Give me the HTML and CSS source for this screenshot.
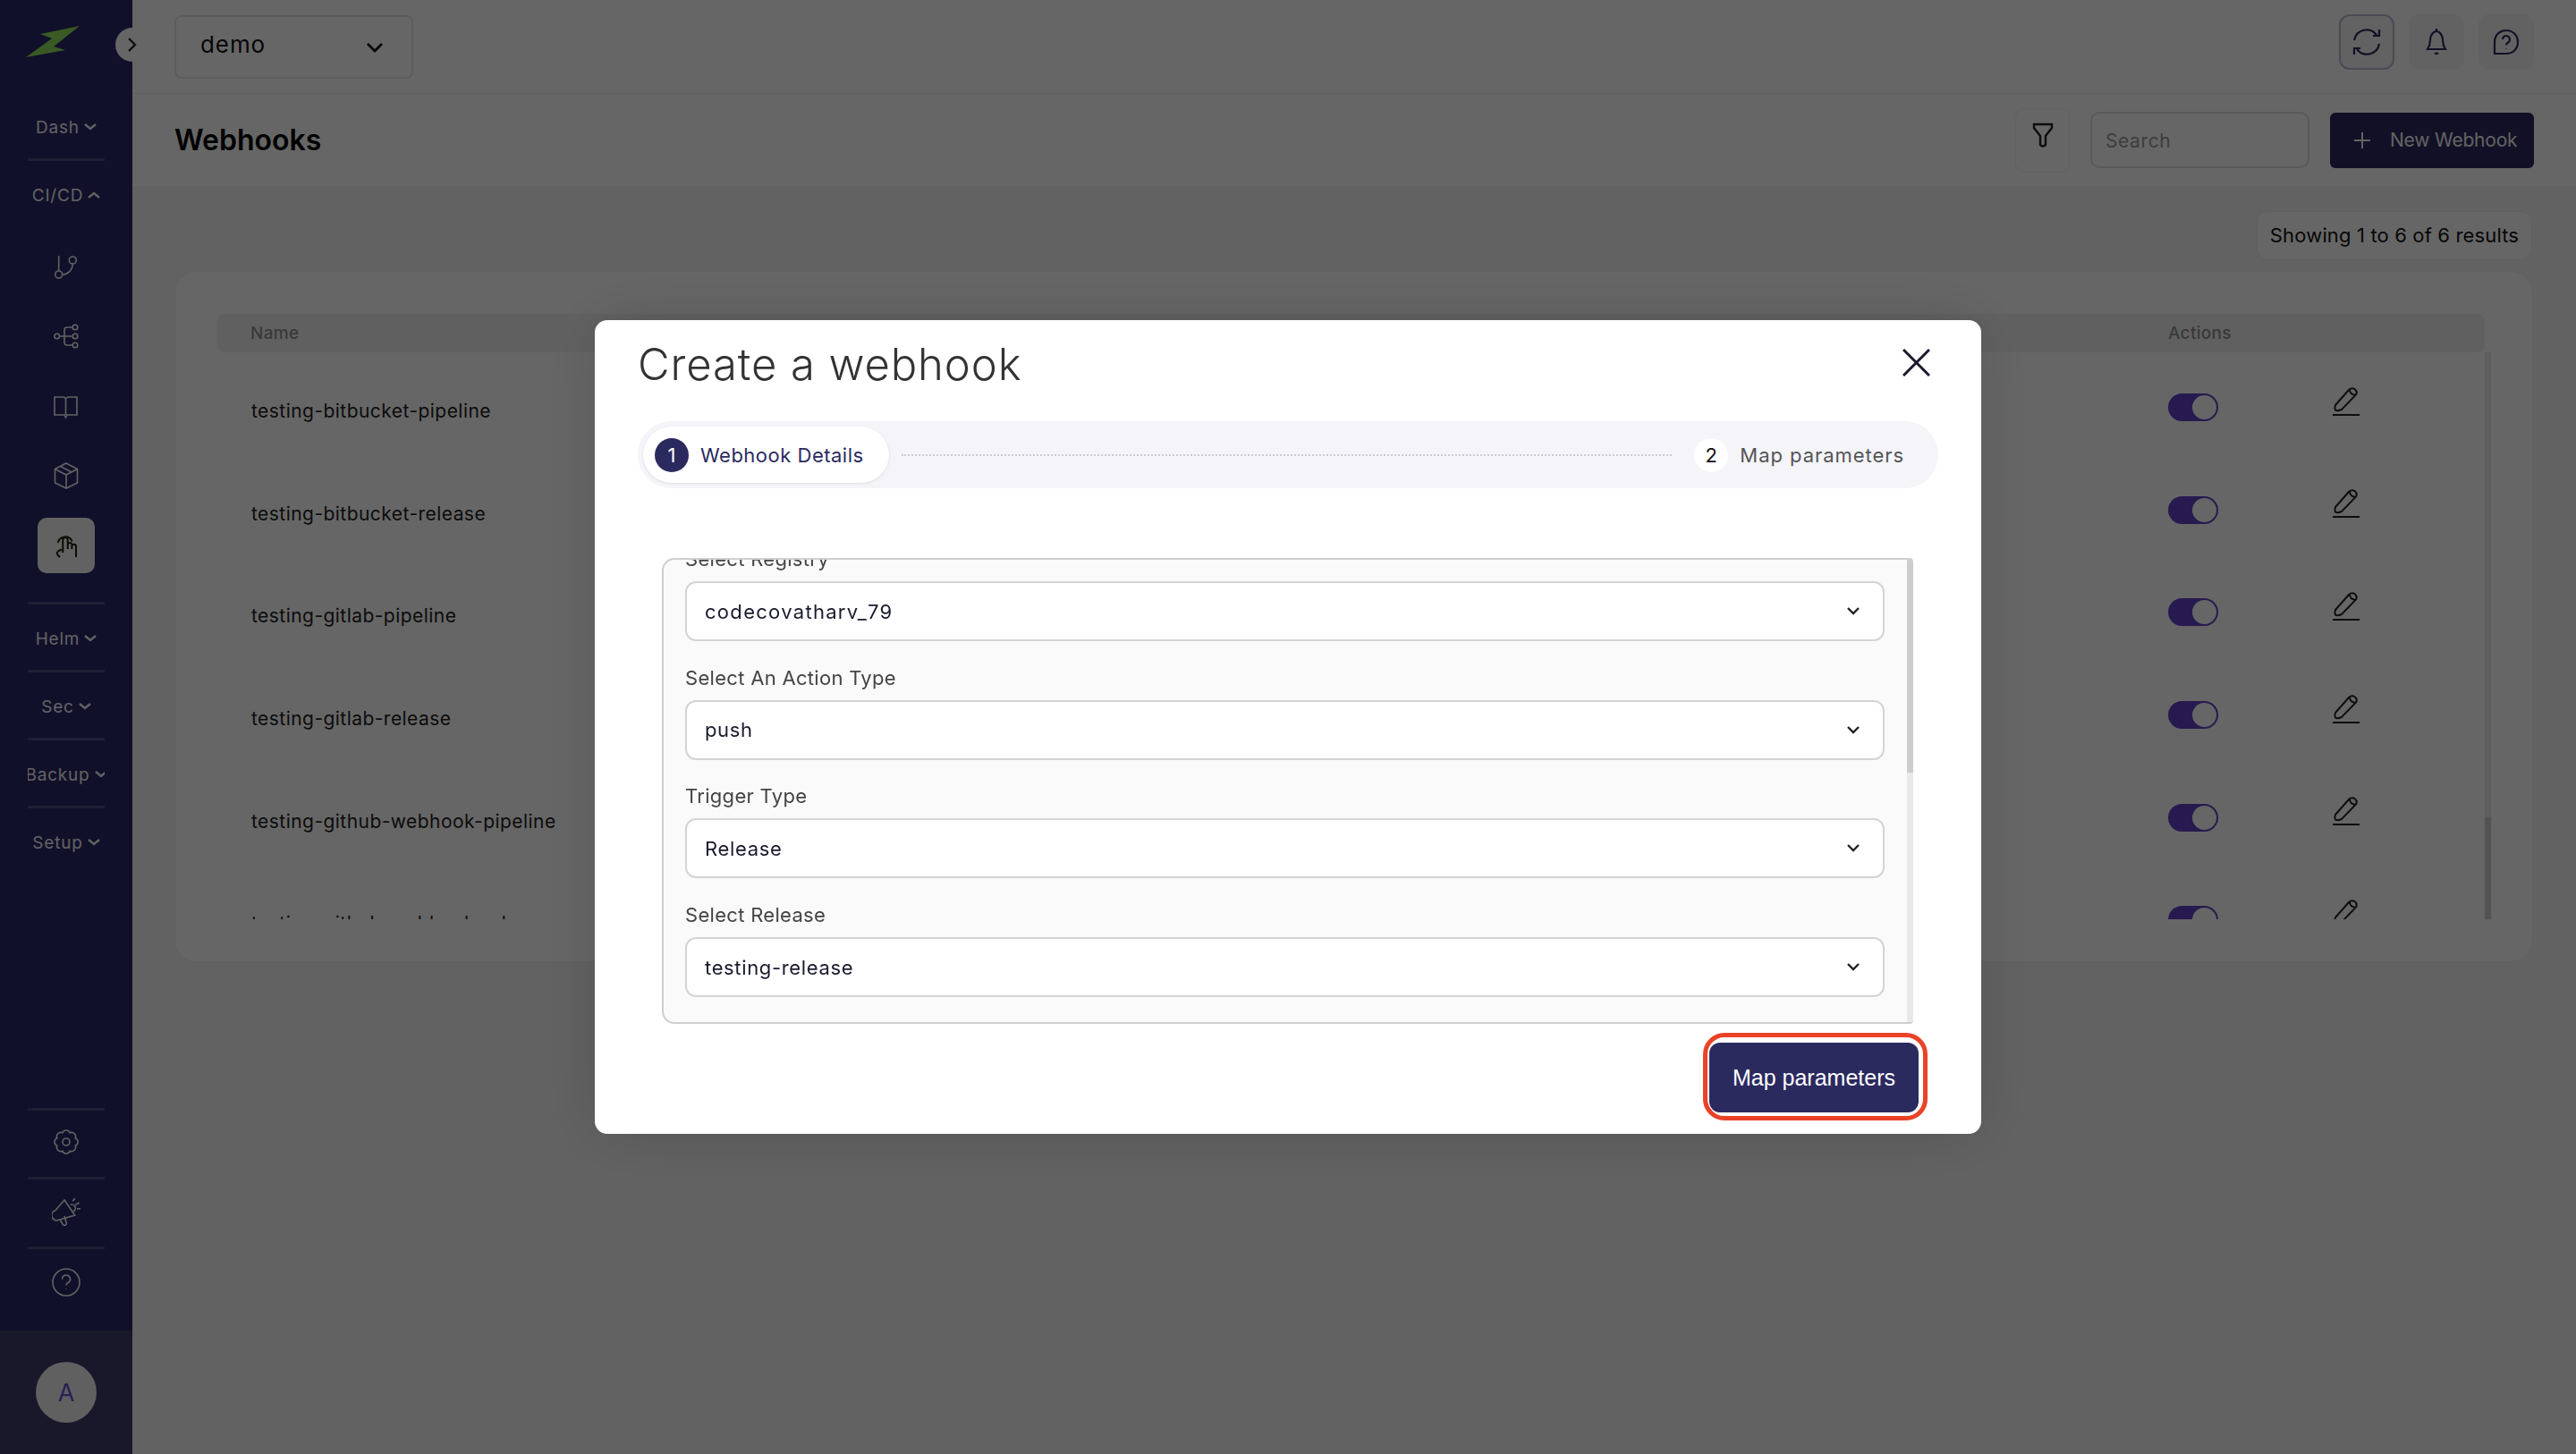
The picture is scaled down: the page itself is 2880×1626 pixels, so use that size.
FILE: index.html
```html
<!DOCTYPE html>
<html lang="en">
<head>
<meta charset="utf-8">
<title>Webhooks</title>
<link rel="stylesheet" href="styles.css">
</head>
<body>
<div class="app">
  <aside class="sidebar">
    <div class="brand">
      <svg class="logo" viewBox="0 0 64 38"><polygon points="60,2 16,11 29,16 0,37 44,29 31,25"/></svg>
    </div>
    <div class="sec"><div class="sec-label"><span>Dash</span><svg class="chev" viewBox="0 0 14 8"><path d="M1 1l6 5 6-5"/></svg></div></div>
    <div class="sec sec-open">
      <div class="sec-label"><span>CI/CD</span><svg class="chev" viewBox="0 0 14 8"><path d="M1 7l6-5 6 5"/></svg></div>
      <div class="nav-list">
        <div class="nav-item"><svg class="ico" viewBox="0 0 32 32"><path d="M7.7 4v17"/><circle cx="7.7" cy="25" r="4"/><circle cx="23.3" cy="9" r="4"/><path d="M11.7 25c6.300 0 11.300-5 11.600-12"/></svg></div>
        <div class="nav-item"><svg class="ico" viewBox="0 0 32 32"><circle cx="5.700" cy="16" r="2.800"/><path d="M8.500 16h14M23 6h-6q-3 0-3 3v14q0 3 3 3h6"/><circle cx="26" cy="6" r="2.800"/><circle cx="26" cy="16" r="2.800"/><circle cx="26" cy="26" r="2.800"/></svg></div>
        <div class="nav-item"><svg class="ico" viewBox="0 0 32 32"><path d="M3 6h9c2 0 3.500 1 3.500 3 0-2 1.500-3 3.500-3h9v20H17l-1.500 3-1.500-3H3zM15.500 9v17"/></svg></div>
        <div class="nav-item"><svg class="ico" viewBox="0 0 32 32"><path d="M16 2l12.500 6.500V24L16 30 3.500 24V8.500zM3.500 8.500L16 15l12.500-6.500M16 15v15M9.500 5.500L22 12"/></svg></div>
        <div class="nav-item nav-active"><svg class="ico ico-dark" viewBox="0 0 32 32"><path d="M12.300 24V9.700a2.700 2.700 0 0 1 5.400 0V20M17.700 15a2.400 2.400 0 0 1 4.700 0V20M22.400 17a2.300 2.300 0 0 1 4.600 0V29M12.300 19.700L7 22.500Q3.500 24.500 9 29M6.700 13A8.500 8.500 0 0 1 22.700 11.300"/></svg></div>
      </div>
    </div>
    <div class="sec"><div class="sec-label"><span>Helm</span><svg class="chev" viewBox="0 0 14 8"><path d="M1 1l6 5 6-5"/></svg></div></div>
    <div class="sec"><div class="sec-label"><span>Sec</span><svg class="chev" viewBox="0 0 14 8"><path d="M1 1l6 5 6-5"/></svg></div></div>
    <div class="sec"><div class="sec-label"><span>Backup</span><svg class="chev" viewBox="0 0 14 8"><path d="M1 1l6 5 6-5"/></svg></div></div>
    <div class="sec sec-last"><div class="sec-label"><span>Setup</span><svg class="chev" viewBox="0 0 14 8"><path d="M1 1l6 5 6-5"/></svg></div></div>
    <div class="side-bottom">
      <div class="bottom-item"><svg class="ico" viewBox="-16 -16 32 32"><path d="M10.160-4.200A4.500 4.500 0 0 1 10.160 4.200 4.500 4.500 0 0 1 4.200 10.160 4.500 4.500 0 0 1-4.200 10.160 4.500 4.500 0 0 1-10.160 4.200 4.500 4.500 0 0 1-10.160-4.200 4.500 4.500 0 0 1-4.200-10.160 4.500 4.500 0 0 1 4.200-10.160 4.500 4.500 0 0 1 10.160-4.200z"/><circle r="4"/></svg></div>
      <div class="bottom-item"><svg class="ico" viewBox="0 0 32 32"><path d="M14 3L25.700 20 7 25.500A5.500 5.500 0 0 1 4 14.500zM9 24.500l3 5.500a2.200 2.200 0 0 0 4-2l-2-7M20.700 8.300a4 4 0 0 1 3.300 7.400M23.300 4.300L25.700 1M26.300 8.300l4.400-2.300M28 12.700h4"/></svg></div>
      <div class="bottom-item"><svg class="ico" viewBox="0 0 32 32"><circle cx="16" cy="16" r="15"/><path d="M11.500 12.500a4.500 4.500 0 1 1 6.500 4c-1.300.8-2 1.500-2 3M16 23.500v.6"/></svg></div>
    </div>
    <div class="user"><div class="avatar">A</div></div>
    <button class="collapse" type="button"><svg viewBox="0 0 12 18"><path d="M2 2l7 7-7 7"/></svg></button>
  </aside>

  <main class="main">
    <header class="topbar">
      <div class="org"><span>demo</span><svg class="org-chev" viewBox="0 0 20 12"><path d="M2 2l8 8 8-8"/></svg></div>
      <div class="top-actions">
        <div class="top-btn top-btn-on"><svg class="ico-top" viewBox="0 0 32 32"><path d="M2 14A14 14 0 0 1 27 8M30 2v7h-7M30 18A14 14 0 0 1 5 24M2 30v-7h7"/></svg></div>
        <div class="top-btn"><svg class="ico-top" viewBox="0 0 32 32"><path d="M6 24c2-3 3-5 3-10 0-5 3-10 7-10s7 5 7 10c0 5 1 7 3 10zM14 28q2 2 4 0M16 1v3" /></svg></div>
        <div class="top-btn"><svg class="ico-top" viewBox="0 0 32 32"><path d="M3 29V16C3 8 9 3 16 3s13 5 13 13-6 13-13 13zM12 13a4 4 0 1 1 6 3.500c-1.300.7-2 1.300-2 3M16 23v.6"/></svg></div>
      </div>
    </header>
    <section class="pagehead">
      <h1 class="page-title">Webhooks</h1>
      <div class="filter"><svg viewBox="0 0 24 28"><path d="M2 2h20v4l-7 9v10q-3 3-6 0V15L2 6z"/></svg></div>
      <div class="search">Search</div>
      <div class="new-btn"><svg viewBox="0 0 18 18"><path d="M9 0v18M0 9h18"/></svg><span>New Webhook</span></div>
    </section>
    <div class="results-row"><div class="results">Showing 1 to 6 of 6 results</div></div>
    <section class="card">
      <div class="thead"><span>Name</span><span>Actions</span><span></span></div>
      <div class="tbody">
        <div class="rows">
          <div class="row"><div class="cell-name">testing-bitbucket-pipeline</div><div class="cell-toggle"><span class="toggle"><i></i></span></div><div class="cell-edit"><svg viewBox="0 0 30 33"><path d="M3 21L18 4q3-3 6.500-1 3.500 3 1.500 6.500L10 26q-5 2-7 .5-1-2.500 0-5.500zM19 3.500q0 5.500 6.500 6.500M0 32h30"/></svg></div></div>
          <div class="row"><div class="cell-name">testing-bitbucket-release</div><div class="cell-toggle"><span class="toggle"><i></i></span></div><div class="cell-edit"><svg viewBox="0 0 30 33"><path d="M3 21L18 4q3-3 6.500-1 3.500 3 1.500 6.500L10 26q-5 2-7 .5-1-2.500 0-5.500zM19 3.500q0 5.500 6.500 6.500M0 32h30"/></svg></div></div>
          <div class="row"><div class="cell-name">testing-gitlab-pipeline</div><div class="cell-toggle"><span class="toggle"><i></i></span></div><div class="cell-edit"><svg viewBox="0 0 30 33"><path d="M3 21L18 4q3-3 6.500-1 3.500 3 1.500 6.500L10 26q-5 2-7 .5-1-2.500 0-5.500zM19 3.500q0 5.500 6.500 6.500M0 32h30"/></svg></div></div>
          <div class="row"><div class="cell-name">testing-gitlab-release</div><div class="cell-toggle"><span class="toggle"><i></i></span></div><div class="cell-edit"><svg viewBox="0 0 30 33"><path d="M3 21L18 4q3-3 6.500-1 3.500 3 1.500 6.500L10 26q-5 2-7 .5-1-2.500 0-5.500zM19 3.500q0 5.500 6.500 6.500M0 32h30"/></svg></div></div>
          <div class="row"><div class="cell-name">testing-github-webhook-pipeline</div><div class="cell-toggle"><span class="toggle"><i></i></span></div><div class="cell-edit"><svg viewBox="0 0 30 33"><path d="M3 21L18 4q3-3 6.500-1 3.500 3 1.500 6.500L10 26q-5 2-7 .5-1-2.500 0-5.500zM19 3.500q0 5.500 6.500 6.500M0 32h30"/></svg></div></div>
          <div class="row"><div class="cell-name">testing-github-webhook-release</div><div class="cell-toggle"><span class="toggle"><i></i></span></div><div class="cell-edit"><svg viewBox="0 0 30 33"><path d="M3 21L18 4q3-3 6.500-1 3.500 3 1.500 6.500L10 26q-5 2-7 .5-1-2.500 0-5.500zM19 3.500q0 5.500 6.500 6.500M0 32h30"/></svg></div></div>
        </div>
        <div class="tscroll"><div class="tthumb"></div></div>
      </div>
    </section>
  </main>
</div>

<div class="overlay">
  <div class="modal">
    <div class="modal-head">
      <h2 class="modal-title">Create a webhook</h2>
      <button class="close" type="button"><svg viewBox="0 0 31 31"><path d="M1 1l29 29M30 1L1 30"/></svg></button>
    </div>
    <div class="stepper">
      <div class="step-on"><span class="num num-on">1</span><span class="step-text">Webhook Details</span></div>
      <div class="step-line"></div>
      <span class="num">2</span><span class="step-text step-off">Map parameters</span>
    </div>
    <div class="panel">
      <div class="form">
        <div class="field"><div class="label">Select Registry</div><div class="select"><span class="val-wide">codecovatharv_79</span><svg class="sel-chev" viewBox="0 0 14 9"><path d="M1 1l6 6 6-6"/></svg></div></div>
        <div class="field"><div class="label">Select An Action Type</div><div class="select"><span>push</span><svg class="sel-chev" viewBox="0 0 14 9"><path d="M1 1l6 6 6-6"/></svg></div></div>
        <div class="field"><div class="label">Trigger Type</div><div class="select"><span>Release</span><svg class="sel-chev" viewBox="0 0 14 9"><path d="M1 1l6 6 6-6"/></svg></div></div>
        <div class="field"><div class="label">Select Release</div><div class="select"><span>testing-release</span><svg class="sel-chev" viewBox="0 0 14 9"><path d="M1 1l6 6 6-6"/></svg></div></div>
      </div>
      <div class="pscroll"><div class="pthumb"></div></div>
    </div>
    <div class="modal-foot">
      <button class="map-btn" type="button">Map parameters<span class="ring"></span></button>
    </div>
  </div>
</div>
</body>
</html>
```
FILE: styles.css
```css
* { box-sizing: border-box; }
html, body { margin: 0; height: 100%; overflow: hidden; }
body { font-family: Inter, "Liberation Sans", sans-serif; color: #222; background: #f5f5f6; }
svg { display: block; fill: none; }
button { border: 0; padding: 0; background: none; font: inherit; }

.app { display: flex; height: 1626px; }

/* sidebar */
.sidebar { position: relative; width: 148px; flex: none; background: #2b2969; display: flex; flex-direction: column; align-items: center; color: #f4f4f8; }
.brand { height: 104px; width: 100%; padding: 27px 0 0 29px; }
.logo { width: 64px; height: 38px; }
.logo polygon { fill: #8fe05a; }
.sec { width: 86px; height: 76px; flex: none; border-bottom: 3px solid rgba(255,255,255,.17); overflow: hidden; display: flex; flex-direction: column; align-items: center; }
.sec-open { height: 496px; }
.sec-last { border-bottom: 0; }
.sec-label { height: 76px; flex: none; display: flex; align-items: center; justify-content: center; gap: 5px; width: 86px; font-size: 19px; letter-spacing: .8px; }
.sec-label span { flex: none; }
.chev { width: 14px; height: 8px; flex: none; }
.chev path { stroke: currentColor; stroke-width: 2.4; }
.nav-list { display: flex; flex-direction: column; align-items: center; padding-top: 3px; }
.nav-item { width: 64px; height: 78px; display: flex; align-items: center; justify-content: center; }
.nav-active { height: 62px; margin-top: 8px; background: #f5f5f6; border-radius: 10px; }
.ico { width: 32px; height: 32px; stroke: currentColor; stroke-width: 1.6; }
.ico-dark { stroke-width: 2; stroke: #222210; }
.side-bottom { margin-top: auto; margin-bottom: 17px; width: 86px; }
.bottom-item { height: 77.500px; border-top: 3px solid rgba(255,255,255,.17); display: flex; align-items: center; justify-content: center; }
.bottom-item:not(:last-child) { padding-bottom: 3px; }
.user { width: 100%; height: 138px; flex: none; background: #3c3c69; display: flex; justify-content: center; padding-top: 35px; }
.avatar { width: 68px; height: 68px; border-radius: 50%; background: #f0f0f3; color: #6b4bd0; font-size: 27px; display: flex; align-items: center; justify-content: center; }
.collapse { position: absolute; left: 129px; top: 31px; width: 38px; height: 38px; border-radius: 50%; background: #fff; display: flex; align-items: center; justify-content: center; }
.collapse svg { width: 12px; height: 18px; }
.collapse path { stroke: #222; stroke-width: 2.4; }

/* main */
.main { flex: 1; min-width: 0; display: flex; flex-direction: column; }
.topbar { height: 105px; flex: none; background: #fff; border-bottom: 1px solid #eee; display: flex; justify-content: space-between; align-items: flex-start; padding: 0 47px; }
.org { width: 267px; height: 71px; margin-top: 17px; border: 2px solid #e6e6e6; border-radius: 8px; display: flex; align-items: center; justify-content: space-between; padding: 0 31px 6px 27px; font-size: 26px; letter-spacing: .9px; color: #111; }
.org-chev { width: 20px; height: 12px; margin-top: 6px; }
.org-chev path { stroke: #111; stroke-width: 2.8; }
.top-actions { display: flex; gap: 16px; margin-top: 16px; }
.top-btn { width: 62px; height: 62px; border-radius: 12px; background: #f4f4f5; display: flex; align-items: center; justify-content: center; }
.top-btn-on { border: 2px solid #b9b8d6; }
.ico-top { width: 32px; height: 32px; stroke: #2b2a5f; stroke-width: 2.2; }
.pagehead { height: 103px; flex: none; background: #fff; display: flex; align-items: center; padding: 0 47px; gap: 23px; }
.page-title { margin: 0 auto 0 0; font-size: 32px; font-weight: 600; color: #000; }
.filter { width: 61px; height: 72px; border: 1px solid #f2f2f2; border-radius: 10px; display: flex; align-items: flex-start; justify-content: center; padding-top: 15px; }
.filter svg { width: 24px; height: 28px; stroke: #222; stroke-width: 2.4; }
.search { width: 245px; height: 63px; border: 2px solid #dedede; border-radius: 10px; display: flex; align-items: center; padding: 2px 15px 0; font-size: 21px; letter-spacing: .6px; color: #9a9a9a; }
.new-btn { width: 228px; height: 62px; border-radius: 6px; background: #2b2a5f; color: #f4f4f4; display: flex; align-items: center; gap: 22px; padding-left: 27px; font-size: 21px; letter-spacing: -.2px; white-space: nowrap; }
.new-btn svg { width: 18px; height: 18px; flex: none; }
.new-btn path { stroke: #f4f4f4; stroke-width: 2; }
.results-row { display: flex; justify-content: flex-end; padding: 28px 49px 0 0; }
.results { height: 55px; width: 308px; background: #fff; border: 1px solid #ececec; border-radius: 12px; display: flex; align-items: center; justify-content: center; padding-bottom: 2px; font-size: 22px; letter-spacing: .15px; color: #111; white-space: nowrap; }
.card { margin: 12px 48px 0 47px; height: 773px; background: #fff; border: 1px solid #efefef; border-radius: 24px; padding: 47px 46px 47px 47px; }
.thead { display: grid; grid-template-columns: 1fr 184px 170px; height: 43px; align-items: center; padding-left: 37px; margin-right: 7px; background: #f1f1f3; border-radius: 8px; font-size: 19px; font-weight: 500; color: #8f8f8f; letter-spacing: .3px; }
.tbody { display: flex; height: 634px; }
.rows { flex: 1; overflow: hidden; }
.row { height: 114.600px; display: grid; grid-template-columns: 1fr 184px 170px; align-items: center; padding-left: 37px; }
.cell-name { padding: 17px 0 0 1px; font-size: 21px; letter-spacing: .45px; color: #222; }
.cell-toggle { padding-top: 9px; }
.toggle { display: block; width: 56px; height: 31px; border-radius: 16px; background: #6241c8; position: relative; }
.toggle i { position: absolute; right: 2px; top: 2px; width: 27px; height: 27px; border-radius: 50%; background: #fff; }
.cell-edit { padding-bottom: 6px; }
.cell-edit svg { width: 30px; height: 33px; stroke: #222; stroke-width: 2; }
.tscroll { width: 7px; flex: none; background: #ececee; display: flex; align-items: flex-end; }
.tthumb { width: 100%; height: 114px; background: #cfcfd2; }

/* modal */
.overlay { position: fixed; inset: 0; background: rgba(0,0,0,.6); display: flex; align-items: center; justify-content: center; }
.modal { width: 1550px; height: 910px; background: #fff; border-radius: 14px; padding: 0 48px; display: flex; flex-direction: column; box-shadow: 0 0 70px rgba(0,0,0,.14); }
.modal-head { height: 113px; flex: none; display: flex; justify-content: space-between; align-items: flex-start; padding-right: 9px; }
.modal-title { margin: 0; font-size: 49px; line-height: 100px; font-weight: 300; color: #333; letter-spacing: .9px; }
.close { margin-top: 32px; width: 31px; height: 31px; }
.close svg { width: 31px; height: 31px; }
.close path { stroke: #1a1a2e; stroke-width: 3; }
.stepper { height: 75px; flex: none; background: #f4f4f9; border-radius: 38px; padding: 0 38px 0 6px; display: flex; align-items: center; }
.step-on { width: 275px; height: 63px; background: #fff; border-radius: 32px; display: flex; align-items: center; gap: 13px; padding-left: 13px; box-shadow: 0 1px 3px rgba(0,0,0,.1); }
.num { width: 38px; height: 38px; flex: none; border-radius: 50%; background: #fff; display: flex; align-items: center; justify-content: center; font-size: 22px; color: #111; }
.num-on { background: #2b2a5f; color: #fff; }
.step-text { font-size: 22px; letter-spacing: .5px; color: #2b2a5f; white-space: nowrap; }
.step-line { flex: 1; margin: 0 25px 0 14px; border-top: 2px dotted #ccc; }
.step-off { margin-left: 13px; color: #555; letter-spacing: .95px; }
.panel { height: 521px; flex: none; margin: 78px 28px 0 27px; background: #fafafa; border: 2px solid #cfcfcf; border-right: 0; border-radius: 14px 4px 4px 14px; overflow: hidden; display: flex; }
.form { flex: 1; margin-top: -42px; padding: 0 25px 0 24px; }
.field { height: 132.700px; }
.label { height: 66px; line-height: 50px; padding-top: 16px; font-size: 22px; letter-spacing: .3px; color: #444; }
.select { height: 67px; background: #fff; border: 2px solid #d4d4d4; border-radius: 12px; display: flex; align-items: center; justify-content: space-between; padding: 0 26px 0 20px; font-size: 22px; letter-spacing: .65px; color: #1a1a2e; }
.val-wide { letter-spacing: 1.3px; }
.sel-chev { width: 14px; height: 9px; }
.sel-chev path { stroke: #222; stroke-width: 2.4; }
.pscroll { width: 7px; flex: none; background: #e9e9e9; }
.pthumb { height: 238px; background: #cdcdcd; }
.modal-foot { display: flex; justify-content: flex-end; padding: 21px 22px 0 0; }
.map-btn { position: relative; width: 234px; height: 78px; background: #2b2a5f; border-radius: 12px; color: #fff; font-family: "Liberation Sans", Arial, sans-serif; font-size: 25px; }
.ring { position: absolute; left: -7px; right: -10px; top: -11px; bottom: -9px; border: 5px solid #ea4228; border-radius: 24px; }
```
